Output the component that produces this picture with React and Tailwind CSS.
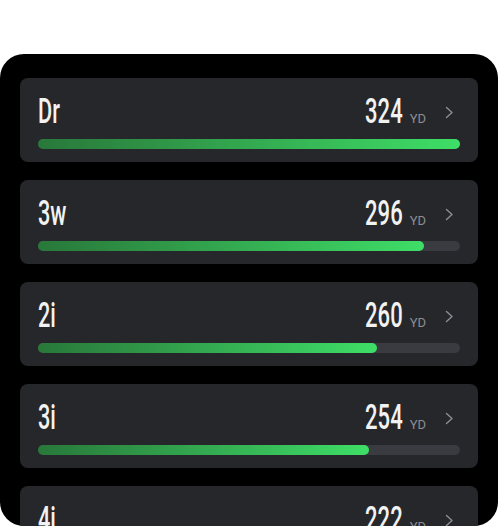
import React from 'react';

const CLUBS = [
  { club: 'Dr', yards: 324 },
  { club: '3w', yards: 296 },
  { club: '2i', yards: 260 },
  { club: '3i', yards: 254 },
  { club: '4i', yards: 222 },
];

const MAX_YARDS = 324;

function Chevron() {
  return (
    <svg width="9" height="13" viewBox="0 0 9 13" fill="none" className="shrink-0">
      <polyline points="1.5,1.5 7,6.5 1.5,11.5" stroke="#8b8e94" strokeWidth="1.4" strokeLinecap="round" strokeLinejoin="round" />
    </svg>
  );
}

function ClubRow({ club, yards }) {
  const pct = (yards / MAX_YARDS) * 100;
  return (
    <div className="rounded-lg bg-[#26272a] pl-[18px] pr-[18px] pt-4 pb-[13px]">
      <div className="flex items-baseline justify-between">
        {/* club name, condensed display type */}
        <span className="inline-block origin-left scale-x-[0.62] text-[35px] font-medium leading-[35px] text-[#f2f2f2]">
          {club}
        </span>
        <div className="flex items-baseline">
          <span className="inline-block origin-right scale-x-[0.63] text-[35px] font-medium leading-[35px] text-[#f2f2f2]">
            {yards}
          </span>
          <span className="ml-[7px] text-[13px] text-[#8b8e94]">YD</span>
          <span className="ml-[19px] mr-[6px] self-center translate-y-[1px]">
            <Chevron />
          </span>
        </div>
      </div>
      <div className="mt-[10px] h-2.5 rounded-full bg-[#3a3b40]">
        <div
          className="h-full rounded-full bg-gradient-to-r from-[#28783a] to-[#3ede67]"
          style={{ width: `${pct}%` }}
        />
      </div>
    </div>
  );
}

export default function App() {
  return (
    <div className="min-h-screen bg-white pt-[54px]" style={{ fontFamily: 'Roboto, "Liberation Sans", sans-serif' }}>
      <div className="h-[472px] overflow-hidden rounded-3xl bg-black px-5 pt-6">
        <div className="flex flex-col gap-[18px]">
          {CLUBS.map((c) => (
            <ClubRow key={c.club} club={c.club} yards={c.yards} />
          ))}
        </div>
      </div>
    </div>
  );
}
